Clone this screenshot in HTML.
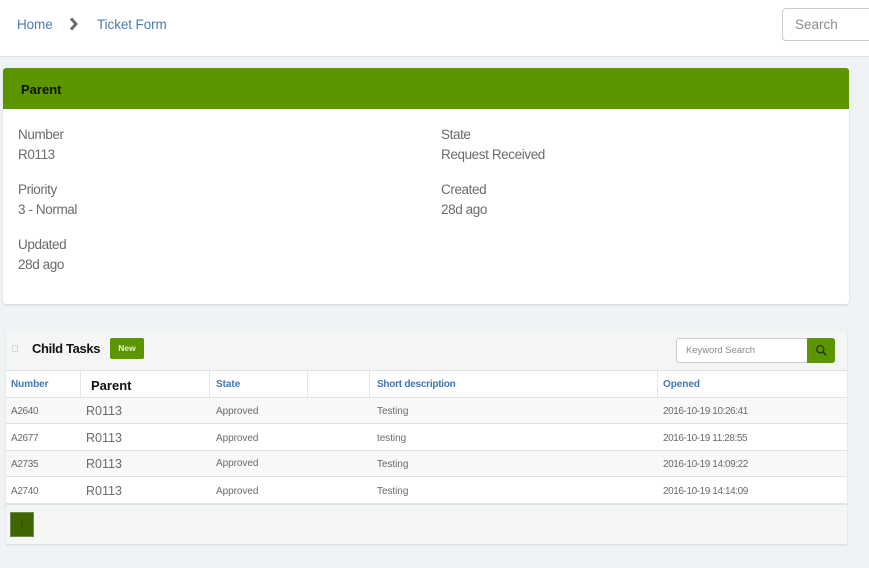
<!DOCTYPE html>
<html>
<head>
<meta charset="utf-8">
<style>
html,body{margin:0;padding:0}
body{width:869px;height:568px;overflow:hidden;background:#eff3f5;position:relative;font-family:"Liberation Sans",sans-serif;color:#666}
div,span{position:absolute;white-space:nowrap;box-sizing:border-box}
.t{line-height:20px}
.link{color:#4a7cb0}
.lbl{font-size:13.5px;color:#6b6b6b;letter-spacing:-.4px}
.h{font-size:10px;font-weight:bold;color:#3f76b4;line-height:14px;letter-spacing:-.05px}
.c{font-size:10px;color:#6a6a6a;line-height:14px;letter-spacing:-.05px}
.d{letter-spacing:-.42px}
.a{letter-spacing:-.35px}
.p{font-size:12.5px;color:#6a6a6a;line-height:16px}
.vl{width:1px;background:#e3e6e7;top:371px;height:26px}
.hl{left:6px;width:841px;height:1px;background:#dfe2e3}
</style>
</head>
<body>
<div style="left:0;top:0;width:869px;height:57px;background:#fff;border-bottom:1px solid #dfe2e3"></div>
<div class="t link" style="left:17px;top:15px;font-size:13.5px;letter-spacing:-.1px">Home</div>
<svg style="position:absolute;left:68px;top:16px" width="12" height="16" viewBox="0 0 12 16"><path d="M3 2.5 L8 8 L3 13.5" fill="none" stroke="#6d6d6d" stroke-width="3"/></svg>
<div class="t link" style="left:97px;top:15px;font-size:13.5px;letter-spacing:-.1px">Ticket Form</div>
<div style="left:782px;top:8px;width:100px;height:33px;background:#fff;border:1px solid #ccc;border-radius:4px"></div>
<div class="t" style="left:795px;top:15px;font-size:13.5px;color:#8d8d8d">Search</div>

<div style="left:3px;top:68px;width:846px;height:236px;background:#fff;border-radius:3px;box-shadow:0 1px 2px rgba(0,0,0,.14)"></div>
<div style="left:3px;top:68px;width:846px;height:41px;background:#5b9500;border-radius:3px 3px 0 0"></div>
<div class="t" style="left:21px;top:80px;font-size:13px;font-weight:bold;color:#0c1400">Parent</div>

<div class="t lbl" style="left:18px;top:125px">Number</div>
<div class="t lbl" style="left:18px;top:145px">R0113</div>
<div class="t lbl" style="left:18px;top:180px">Priority</div>
<div class="t lbl" style="left:18px;top:200px">3 - Normal</div>
<div class="t lbl" style="left:18px;top:235px">Updated</div>
<div class="t lbl" style="left:18px;top:255px">28d ago</div>
<div class="t lbl" style="left:441px;top:125px">State</div>
<div class="t lbl" style="left:441px;top:145px">Request Received</div>
<div class="t lbl" style="left:441px;top:180px">Created</div>
<div class="t lbl" style="left:441px;top:200px">28d ago</div>

<div style="left:6px;top:332px;width:841px;height:212px;background:#f4f5f5;box-shadow:0 1px 2px rgba(0,0,0,.12)"></div>
<div style="left:12px;top:345px;width:6px;height:7px;border:1px solid #d9d9d9"></div>
<div class="t" style="left:32px;top:339px;font-size:13px;font-weight:bold;color:#111;letter-spacing:-.35px">Child Tasks</div>
<div style="left:110px;top:338px;width:34px;height:21px;background:#5b9500;border-radius:2px;color:#e8f2d8;font-size:8.5px;font-weight:bold;text-align:center;line-height:21px">New</div>
<div style="left:676px;top:338px;width:132px;height:25px;background:#fff;border:1px solid #ccc;border-radius:3px 0 0 3px"></div>
<div class="c" style="left:686px;top:344px;color:#8a8a8a;font-size:9.5px">Keyword Search</div>
<div style="left:807px;top:338px;width:28px;height:25px;background:#5b9500;border-radius:0 3px 3px 0"></div>
<svg style="position:absolute;left:815px;top:344px" width="12" height="12" viewBox="0 0 12 12"><circle cx="5.3" cy="5.3" r="3.6" fill="none" stroke="#1d2d10" stroke-width="1.2"/><path d="M8 8 L11 11" stroke="#1d2d10" stroke-width="1.4"/></svg>

<div style="left:6px;top:371px;width:841px;height:26px;background:#fff"></div>
<div style="left:6px;top:398px;width:841px;height:25px;background:#f8f8f8"></div>
<div style="left:6px;top:424px;width:841px;height:26px;background:#fff"></div>
<div style="left:6px;top:451px;width:841px;height:25px;background:#f8f8f8"></div>
<div style="left:6px;top:477px;width:841px;height:26px;background:#fff"></div>
<div class="hl" style="top:370px"></div>
<div class="hl" style="top:397px"></div>
<div class="hl" style="top:423px"></div>
<div class="hl" style="top:450px"></div>
<div class="hl" style="top:476px"></div>
<div class="hl" style="top:503px;height:2px"></div>
<div class="vl" style="left:80px"></div>
<div class="vl" style="left:209px"></div>
<div class="vl" style="left:307px"></div>
<div class="vl" style="left:369px"></div>
<div class="vl" style="left:657px"></div>

<div class="h" style="left:11px;top:378px">Number</div>
<div class="t" style="left:91px;top:376px;font-size:13px;font-weight:bold;color:#111">Parent</div>
<div class="h" style="left:216px;top:378px">State</div>
<div class="h" style="left:377px;top:378px;letter-spacing:-.25px">Short description</div>
<div class="h" style="left:663px;top:378px">Opened</div>

<div class="c a" style="left:11px;top:405px">A2640</div>
<div class="p" style="left:86px;top:403px">R0113</div>
<div class="c" style="left:216px;top:405px">Approved</div>
<div class="c" style="left:377px;top:405px">Testing</div>
<div class="c d" style="left:663px;top:405px">2016-10-19 10:26:41</div>

<div class="c a" style="left:11px;top:432px">A2677</div>
<div class="p" style="left:86px;top:430px">R0113</div>
<div class="c" style="left:216px;top:432px">Approved</div>
<div class="c" style="left:377px;top:432px">testing</div>
<div class="c d" style="left:663px;top:432px">2016-10-19 11:28:55</div>

<div class="c a" style="left:11px;top:458px">A2735</div>
<div class="p" style="left:86px;top:456px">R0113</div>
<div class="c" style="left:216px;top:457px">Approved</div>
<div class="c" style="left:377px;top:458px">Testing</div>
<div class="c d" style="left:663px;top:458px">2016-10-19 14:09:22</div>

<div class="c a" style="left:11px;top:485px">A2740</div>
<div class="p" style="left:86px;top:483px">R0113</div>
<div class="c" style="left:216px;top:485px">Approved</div>
<div class="c" style="left:377px;top:485px">Testing</div>
<div class="c d" style="left:663px;top:485px">2016-10-19 14:14:09</div>

<div style="left:10px;top:512px;width:24px;height:25px;background:#3f6600;border:1px solid #6f8a4a;color:#2f4d00;font-size:10px;text-align:center;line-height:23px">1</div>
</body>
</html>
